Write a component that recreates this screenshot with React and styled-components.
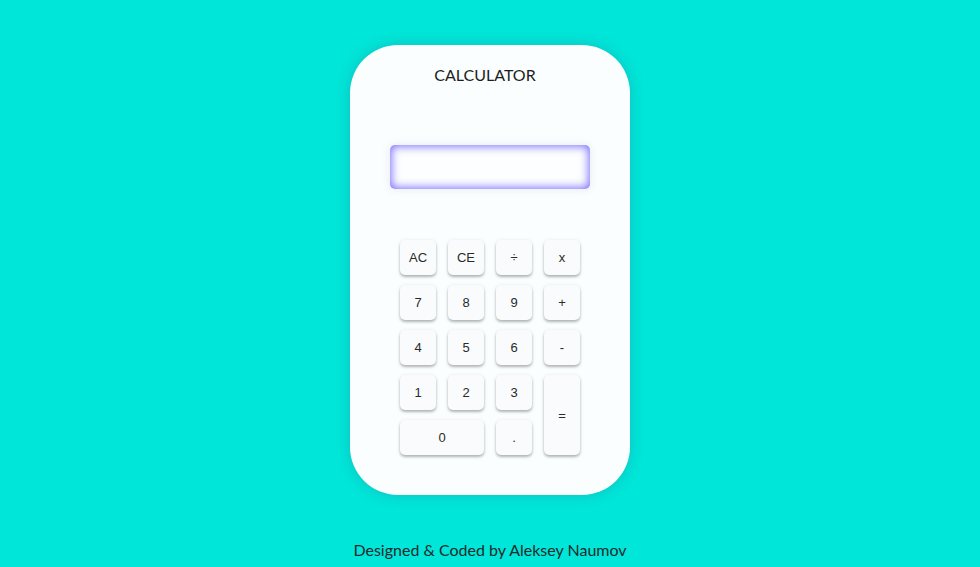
import React from "react";
import styled, { createGlobalStyle } from "styled-components";

const GlobalStyle = createGlobalStyle`
  html, body {
    margin: 0;
    padding: 0;
    background: #00e6d9;
  }
  body {
    font-family: Lato, "Liberation Sans", sans-serif;
  }
`;

const Page = styled.div`
  min-height: 567px;
  display: flex;
  flex-direction: column;
  align-items: center;
  padding-top: 45px;
  box-sizing: border-box;
`;

const Card = styled.div`
  width: 280px;
  height: 450px;
  box-sizing: border-box;
  background: #fafeff;
  border-radius: 48px;
  box-shadow: 0 0 14px rgba(60, 80, 110, 0.25);
  display: flex;
  flex-direction: column;
  align-items: center;
  padding-top: 20px;
`;

const Title = styled.h1`
  margin: 0;
  padding-right: 10px;
  font-family: Lato, sans-serif;
  font-size: 16px;
  line-height: 19px;
  font-weight: 400;
  color: #1d1d1d;
`;

const Screen = styled.div`
  width: 200px;
  height: 44px;
  margin-top: 61px;
  box-sizing: border-box;
  border-radius: 5px;
  background: #fdfeff;
  box-shadow: inset 0 0 10px 1px rgba(90, 75, 255, 0.85),
    0 0 8px rgba(120, 120, 160, 0.15);
`;

const Keys = styled.div`
  margin-top: 51px;
  display: grid;
  grid-template-columns: repeat(4, 36px);
  grid-auto-rows: 35px;
  column-gap: 12px;
  row-gap: 10px;
`;

const Key = styled.button`
  grid-column: ${props => (props.wide ? "span 2" : "auto")};
  grid-row: ${props => (props.tall ? "span 2" : "auto")};
  border: none;
  border-radius: 5px;
  background: #f9fbfc;
  box-shadow: 0 2px 3px rgba(0, 0, 0, 0.28), 0 0 4px rgba(0, 0, 0, 0.06);
  font-family: "Liberation Sans", Arial, sans-serif;
  font-size: 13px;
  color: #2a2a2a;
  padding: 0;
  cursor: pointer;
`;

const Footer = styled.p`
  margin: 45px 0 0;
  font-family: Lato, sans-serif;
  font-size: 16px;
  line-height: 19px;
  color: #1f2a2a;
`;

const keys = [
  { label: "AC" },
  { label: "CE" },
  { label: "÷" },
  { label: "x" },
  { label: "7" },
  { label: "8" },
  { label: "9" },
  { label: "+" },
  { label: "4" },
  { label: "5" },
  { label: "6" },
  { label: "-" },
  { label: "1" },
  { label: "2" },
  { label: "3" },
  { label: "=", tall: true },
  { label: "0", wide: true },
  { label: "." }
];

const App = () => (
  <Page>
    <GlobalStyle />
    <Card>
      <Title>CALCULATOR</Title>
      <Screen />
      <Keys>
        {keys.map(k => (
          <Key key={k.label} wide={k.wide} tall={k.tall}>
            {k.label}
          </Key>
        ))}
      </Keys>
    </Card>
    <Footer>Designed &amp; Coded by Aleksey Naumov</Footer>
  </Page>
);

export default App;
